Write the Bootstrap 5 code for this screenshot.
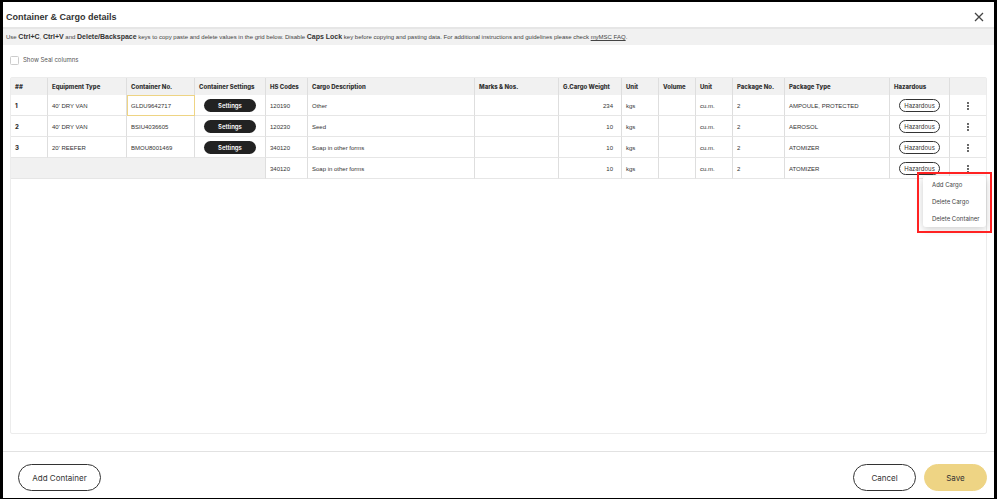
<!DOCTYPE html>
<html lang="en">
<head>
<meta charset="utf-8">
<meta name="viewport" content="width=device-width, initial-scale=1">
<title>Container &amp; Cargo details</title>
<link href="https://cdn.jsdelivr.net/npm/bootstrap@5.3.0/dist/css/bootstrap.min.css" rel="stylesheet">
<style>
body { font-family: "Liberation Sans", Arial, sans-serif; font-size: 6px; line-height: 8px; color: #333; background: #fff; }
.dialog-page { border: solid #000; border-width: 2px 3px 1px; }
.dialog-head { height: 25px; padding: 4px 9px 0 3px; }
.dialog-title { font-size: 9px; line-height: 10px; font-weight: 700; color: #333; }
.close-btn { width: 12px; height: 12px; line-height: 0; }
.hint { background: #f1f1f1; border-top: 2px solid #e6e6e6; padding: 4px 3px; height: 18px; white-space: nowrap; color: #444; }
.hint b { font-size: 7px; color: #333; }
.hint a { color: inherit; }
.seal-row { padding: 11px 7px 0; gap: 4px; height: 32px; font: 6px/8px Inter, sans-serif; color: #555; }
.seal-row input { width: 9px; height: 9px; border: 1px solid #ccc; border-radius: 0; }
.grid-panel { margin: 0 7px 17px; border: 1px solid #ececec; border-radius: 2px; }
.cargo-grid { table-layout: fixed; border-collapse: separate; border-spacing: 0; }
.cargo-grid th, .cargo-grid td { padding: 0 4px; white-space: nowrap; border-right: 1px solid #dedede; vertical-align: middle; }
.cargo-grid th:last-child, .cargo-grid td:last-child { border-right: 0; }
.cargo-grid thead th { height: 17px; background: #f1f1f1; font: 800 6px/8px Inter, sans-serif; color: #333; }
.cargo-grid tbody th, .cargo-grid tbody td { height: 21px; padding-top: 1px; border-bottom: 1px solid #e6e6e6; }
.cargo-grid tbody th { font: 800 6px/8px Inter, sans-serif; }
.cargo-grid .weight { padding-right: 8px; }
.cargo-grid .blank-cell { background: #f1f1f1; }
.cargo-grid .active-cell { box-shadow: inset 1px 1px #eed484; border-color: #eed484; }
.pill { display: inline-block; border-radius: 8px; height: 13px; font: 6px/8px Inter, sans-serif; padding: 0; }
.pill-dark { width: 52px; border: 0; background: #222; color: #fff; font-weight: 600; }
.pill-line { width: 41px; border: 1px solid #333; background: #fff; color: #333; }
.more-btn { width: 10px; height: 12px; line-height: 0; }
.row-menu { position: absolute; z-index: 2; top: 18px; right: 0; width: 63px; border-radius: 3px; background: #fff; box-shadow: 0 2px 8px #0003; }
.row-menu button { display: block; width: 100%; height: 17px; padding: 0 0 0 9px; border: 0; background: none; text-align: left; font: 6px/8px Inter, sans-serif; color: #444; white-space: nowrap; }
.menu-outline { position: absolute; z-index: 3; inset: -4px -6px -6px; border: 2px solid #f22; pointer-events: none; }
.dialog-foot { border-top: 1px solid #e2e2e2; padding: 12px 7px 7px 15px; }
.foot-btn { height: 27px; border: 1px solid #333; border-radius: 14px; background: #fff; color: #333; font: 8px/10px Inter, sans-serif; }
.w-add { width: 83px; }
.w-action { width: 63px; }
.foot-btn.save { background: #eed484; border-color: #eed484; }
</style>
<script src="https://cdn.jsdelivr.net/npm/bootstrap@5.3.0/dist/js/bootstrap.bundle.min.js"></script>
</head>
<body>
<main class="dialog-page min-vh-100 d-flex flex-column">
  <header class="dialog-head d-flex align-items-center justify-content-between">
    <h1 class="dialog-title m-0">Container &amp; Cargo details</h1>
    <button type="button" class="close-btn border-0 bg-transparent p-0" aria-label="Close"><svg width="12" height="12" viewBox="0 0 12 12" stroke="#444" stroke-width="1.3" fill="none"><path d="M2 2l8 8M10 2l-8 8"/></svg></button>
  </header>
  <p class="hint m-0">Use <b>Ctrl+C</b>, <b>Ctrl+V</b> and <b>Delete/Backspace</b> keys to copy paste and delete values in the grid below. Disable <b>Caps Lock</b> key before copying and pasting data. For additional instructions and guidelines please check <a href="#">myMSC FAQ</a>.</p>
  <div class="seal-row d-flex align-items-start">
    <input class="form-check-input m-0" type="checkbox" id="seal"><label for="seal">Show Seal columns</label>
  </div>
  <section class="grid-panel flex-grow-1">
    <table class="cargo-grid w-100">
      <colgroup><col style="width:37px"><col style="width:79px"><col style="width:68px"><col style="width:71px"><col style="width:42px"><col style="width:167px"><col style="width:84px"><col style="width:63px"><col style="width:37px"><col style="width:37px"><col style="width:37px"><col style="width:52px"><col style="width:105px"><col style="width:60px"><col style="width:36px"></colgroup>
      <thead><tr><th>##</th><th>Equipment Type</th><th>Container No.</th><th>Container Settings</th><th>HS Codes</th><th>Cargo Description</th><th>Marks &amp; Nos.</th><th>G.Cargo Weight</th><th>Unit</th><th>Volume</th><th>Unit</th><th>Package No.</th><th>Package Type</th><th>Hazardous</th><th></th></tr></thead>
      <tbody>
        <tr><th scope="row">1</th><td>40' DRY VAN</td><td class="active-cell">GLDU9642717</td><td class="text-center"><button type="button" class="pill pill-dark">Settings</button></td><td>120190</td><td>Other</td><td></td><td class="weight text-end">234</td><td>kgs</td><td></td><td>cu.m.</td><td>2</td><td>AMPOULE, PROTECTED</td><td class="text-center"><button type="button" class="pill pill-line">Hazardous</button></td><td class="text-center"><button type="button" class="more-btn border-0 bg-transparent p-0" aria-label="Row actions"><svg width="10" height="12" viewBox="0 0 10 12" fill="#222"><circle cx="5" cy="3" r=".9"/><circle cx="5" cy="6" r=".9"/><circle cx="5" cy="9" r=".9"/></svg></button></td></tr>
        <tr><th scope="row">2</th><td>40' DRY VAN</td><td>BSIU4036605</td><td class="text-center"><button type="button" class="pill pill-dark">Settings</button></td><td>120230</td><td>Seed</td><td></td><td class="weight text-end">10</td><td>kgs</td><td></td><td>cu.m.</td><td>2</td><td>AEROSOL</td><td class="text-center"><button type="button" class="pill pill-line">Hazardous</button></td><td class="text-center"><button type="button" class="more-btn border-0 bg-transparent p-0" aria-label="Row actions"><svg width="10" height="12" viewBox="0 0 10 12" fill="#222"><circle cx="5" cy="3" r=".9"/><circle cx="5" cy="6" r=".9"/><circle cx="5" cy="9" r=".9"/></svg></button></td></tr>
        <tr><th scope="row">3</th><td>20' REEFER</td><td>BMOU8001469</td><td class="text-center"><button type="button" class="pill pill-dark">Settings</button></td><td>340120</td><td>Soap in other forms</td><td></td><td class="weight text-end">10</td><td>kgs</td><td></td><td>cu.m.</td><td>2</td><td>ATOMIZER</td><td class="text-center"><button type="button" class="pill pill-line">Hazardous</button></td><td class="text-center"><button type="button" class="more-btn border-0 bg-transparent p-0" aria-label="Row actions"><svg width="10" height="12" viewBox="0 0 10 12" fill="#222"><circle cx="5" cy="3" r=".9"/><circle cx="5" cy="6" r=".9"/><circle cx="5" cy="9" r=".9"/></svg></button></td></tr>
        <tr><td colspan="4" class="blank-cell"></td><td>340120</td><td>Soap in other forms</td><td></td><td class="weight text-end">10</td><td>kgs</td><td></td><td>cu.m.</td><td>2</td><td>ATOMIZER</td><td class="text-center"><button type="button" class="pill pill-line">Hazardous</button></td><td class="text-center position-relative"><button type="button" class="more-btn border-0 bg-transparent p-0" aria-label="Row actions" aria-expanded="true"><svg width="10" height="12" viewBox="0 0 10 12" fill="#222"><circle cx="5" cy="3" r=".9"/><circle cx="5" cy="6" r=".9"/><circle cx="5" cy="9" r=".9"/></svg></button>
          <div class="row-menu"><button type="button">Add Cargo</button><button type="button">Delete Cargo</button><button type="button">Delete Container</button><span class="menu-outline"></span></div></td></tr>
      </tbody>
    </table>
  </section>
  <footer class="dialog-foot d-flex justify-content-between">
    <button type="button" class="foot-btn w-add p-0">Add Container</button>
    <div class="d-flex gap-2"><button type="button" class="foot-btn w-action p-0">Cancel</button><button type="button" class="foot-btn w-action save p-0">Save</button></div>
  </footer>
</main>
</body>
</html>
